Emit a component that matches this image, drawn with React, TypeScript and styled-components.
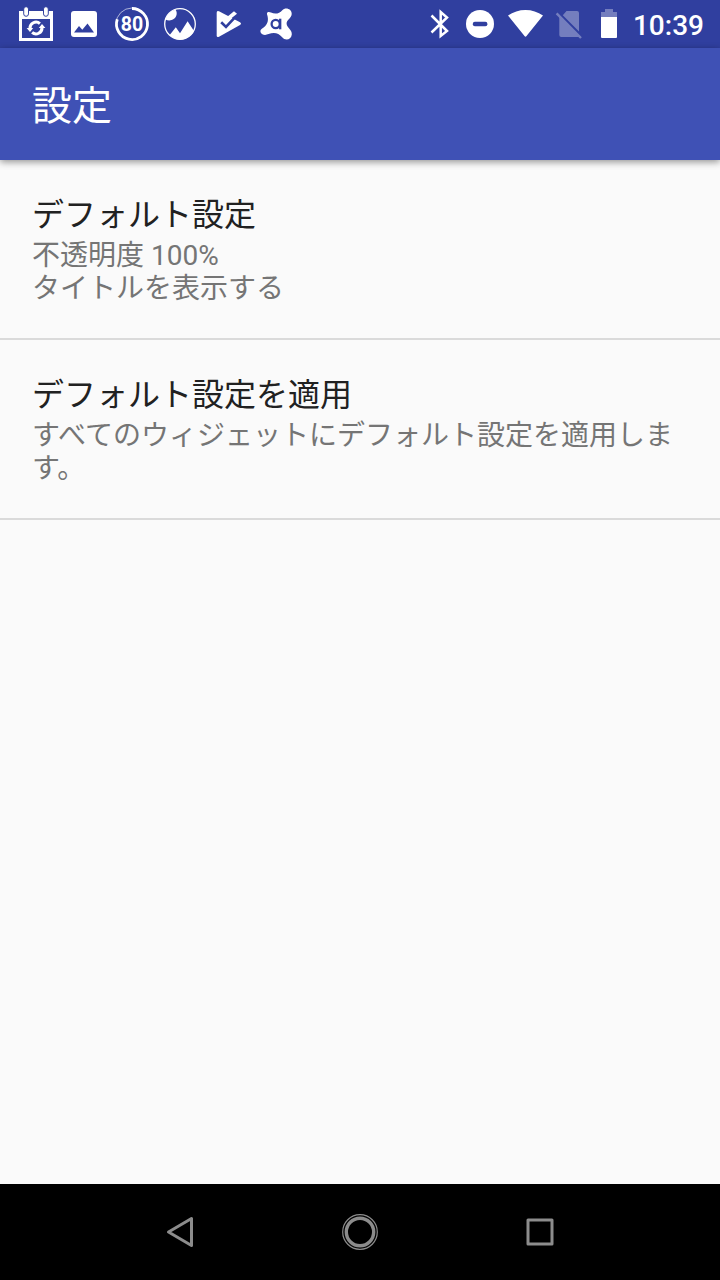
import React from "react";
import styled, { createGlobalStyle } from "styled-components";

const STATUS_BLUE = "#303f9f";

const GlobalStyle = createGlobalStyle`
  * { box-sizing: border-box; }
  body {
    margin: 0;
    background: #fafafa;
    font-family: Roboto, "Noto Sans CJK JP", sans-serif;
  }
`;

const Screen = styled.div`
  width: 720px;
  height: 1280px;
  display: flex;
  flex-direction: column;
  background: #fafafa;
  overflow: hidden;
`;

const StatusBar = styled.header`
  flex: none;
  height: 48px;
  padding: 0 16px 0 12px;
  display: flex;
  align-items: center;
  justify-content: space-between;
  background: ${STATUS_BLUE};
  color: #fff;
`;

const IconGroup = styled.div`
  display: flex;
  align-items: center;
`;

const StatusIcon = styled.svg<{ $w?: number }>`
  display: block;
  width: ${({ $w = 48 }) => $w}px;
  height: 48px;
  fill: #fff;
`;

const Badge = styled.text`
  font: 700 19.5px Roboto, sans-serif;
  text-anchor: middle;
`;

const Clock = styled.time`
  width: 72px;
  font-size: 28px;
  font-weight: 500;
  line-height: 48px;
  padding-top: 3px;
  text-align: right;
  white-space: nowrap;
`;

const AppBar = styled.div`
  flex: none;
  height: 112px;
  padding: 6px 32px 0;
  display: flex;
  align-items: center;
  background: #3f51b5;
  color: #fff;
  box-shadow: 0 2px 7px rgba(0, 0, 0, 0.42);
  z-index: 1;
`;

const Title = styled.h1`
  margin: 0;
  font-size: 40px;
  line-height: 48px;
  font-weight: 400;
`;

const List = styled.main`
  flex: 1;
`;

const Row = styled.section`
  height: 180px;
  padding: 33px 32px 0;
  border-bottom: 2px solid #dadada;
`;

const RowTitle = styled.h2`
  margin: 0 0 2px;
  font-size: 32px;
  line-height: 44px;
  font-weight: 400;
  color: #212121;
`;

const Summary = styled.p`
  margin: 0;
  font-size: 28px;
  line-height: 33px;
  color: #757575;
  white-space: pre-line;
`;

const NavBar = styled.nav`
  flex: none;
  height: 96px;
  display: flex;
  align-items: center;
  justify-content: center;
  gap: 132px;
  background: #000;
`;

const NavIcon = styled.svg`
  display: block;
  width: 48px;
  height: 48px;
  fill: none;
  stroke: #8c8c8c;
  stroke-width: 3;
  stroke-linejoin: round;
`;

const rows = [
  { title: "デフォルト設定", summary: "不透明度 100%\nタイトルを表示する" },
  { title: "デフォルト設定を適用", summary: "すべてのウィジェットにデフォルト設定を適用します。" },
];

function Notifications() {
  return (
    <IconGroup>
      <StatusIcon viewBox="12 0 48 48">
        <path fillRule="evenodd" d="M19 11H53V41H19ZM22 19V38H50V19Z" />
        <g stroke={STATUS_BLUE} strokeWidth="1">
          <rect x="23.7" y="6.7" width="4.8" height="9.6" rx="2.4" />
          <rect x="43.5" y="6.7" width="4.8" height="9.6" rx="2.4" />
        </g>
        <g fill="none" stroke="#fff" strokeWidth="3">
          <path d="M30 28.5A6 6 0 0 1 39.9 23.6" />
          <path d="M42 27.5A6 6 0 0 1 32.1 32.4" />
        </g>
        <path d="M26.6 28H33.2L30 32ZM45.4 28H38.8L42 24Z" />
      </StatusIcon>
      <StatusIcon viewBox="60 0 48 48">
        <rect x="71" y="11" width="26" height="26" rx="3" />
        <path fill={STATUS_BLUE} d="M74 32.5L79 26L82.3 29.8L87.5 23.5L94 32.5Z" />
      </StatusIcon>
      <StatusIcon viewBox="108 0 48 48">
        <circle cx="132" cy="24" r="16" fill="none" stroke="#fff" strokeOpacity=".75" strokeWidth=".8" />
        <path d="M132 8.5A15.5 15.5 0 1 1 117.26 19.2" fill="none" stroke="#fff" strokeWidth="2.8" />
        <Badge x="132" y="31">80</Badge>
      </StatusIcon>
      <StatusIcon viewBox="156 0 48 48">
        <circle cx="180" cy="24" r="15.3" fill="none" stroke="#fff" strokeWidth="1.3" />
        <path d="M165.5 19.5A15.5 15.5 0 0 1 175.5 9.5C177.6 12.8 176.8 16.8 174 18.8C171.2 20.8 168.2 20.8 165.5 19.5Z" />
        <path d="M169.5 35.2L175.8 27.3L180 33.2L187.6 21.2L194 31A15.5 15.5 0 0 1 169.5 35.2Z" />
      </StatusIcon>
      <StatusIcon viewBox="204 0 48 48">
        <path d="M219 11.3L240 22.3Q242 23.6 240 24.9L219 36.8Q216.7 37.8 216.7 35.5V12.8Q216.7 10.2 219 11.3Z" />
        <path d="M221.2 22.3L226 27L238.2 13.8" fill="none" stroke={STATUS_BLUE} strokeWidth="2.6" />
        <path d="M225.8 22.7L223.3 20L234 11.2L237 13.8Z" />
      </StatusIcon>
      <StatusIcon viewBox="252 0 48 48">
        <path d="M267 14.2C266.5 11.7 269.4 11.6 271 12.6C275 14.4 279.4 13.8 282.3 10.2C285.5 6.6 292 9 291.7 14C291.5 18.5 286.5 19.5 286.6 23.5C286.6 27.7 292.3 29.5 291.8 34.5C291.2 40 285.2 41 282.2 37.3C278.5 32.8 274 31.8 268.5 34.1C265.8 35.5 261.7 35.2 260.7 32.5C259.8 29.8 261.7 28.8 263.6 27.5C268 24.2 268.9 19.8 267 14.2Z" />
        <g fill="none" stroke={STATUS_BLUE} strokeWidth="2.3">
          <circle cx="275.7" cy="24" r="4.1" />
          <path d="M280.2 18.7V29.3" />
        </g>
      </StatusIcon>
    </IconGroup>
  );
}

function SystemIcons() {
  return (
    <IconGroup>
      <StatusIcon $w={40} viewBox="420 0 40 48">
        <path fill="none" stroke="#fff" strokeWidth="2.5" d="M431.5 15.5L447 31L440.7 36V12L447 17.5L431.5 32.5" />
      </StatusIcon>
      <StatusIcon $w={40} viewBox="460 0 40 48">
        <circle cx="480" cy="24" r="14" />
        <rect x="472.8" y="21.7" width="14.6" height="4.6" rx="2" fill={STATUS_BLUE} />
      </StatusIcon>
      <StatusIcon $w={50} viewBox="500 0 50 48">
        <path d="M508 15.5C518 8 533 8 543 15.5L526.5 36Q525.5 37.5 524.5 36Z" />
      </StatusIcon>
      <StatusIcon $w={40} viewBox="550 0 40 48">
        <g opacity=".33">
          <path d="M566.5 11H577Q579 11 579 13V31.5L562.8 15.2ZM559.3 16L579.8 37H561.3Q559.3 37 559.3 35Z" />
          <path d="M556.6 13.4L581 38" fill="none" stroke="#fff" strokeWidth="2.4" />
        </g>
      </StatusIcon>
      <StatusIcon $w={42} viewBox="590 0 42 48">
        <path opacity=".33" d="M605 9H613V12H617V17H601V12H605Z" />
        <path d="M601 17H617V37Q617 38 616 38H602Q601 38 601 37Z" />
      </StatusIcon>
      <Clock>10:39</Clock>
    </IconGroup>
  );
}

export default function App() {
  return (
    <Screen>
      <GlobalStyle />
      <StatusBar>
        <Notifications />
        <SystemIcons />
      </StatusBar>
      <AppBar>
        <Title>設定</Title>
      </AppBar>
      <List>
        {rows.map((row) => (
          <Row key={row.title}>
            <RowTitle>{row.title}</RowTitle>
            <Summary>{row.summary}</Summary>
          </Row>
        ))}
      </List>
      <NavBar>
        <NavIcon viewBox="156 1208 48 48">
          <path d="M168.5 1232L191.5 1218.5V1245.5Z" />
        </NavIcon>
        <NavIcon viewBox="336 1208 48 48">
          <circle cx="360" cy="1232" r="13.7" strokeWidth="3.4" />
          <circle cx="360" cy="1232" r="17.3" strokeWidth="1.2" />
        </NavIcon>
        <NavIcon viewBox="516 1208 48 48">
          <rect x="528" y="1220" width="24" height="24" />
        </NavIcon>
      </NavBar>
    </Screen>
  );
}
